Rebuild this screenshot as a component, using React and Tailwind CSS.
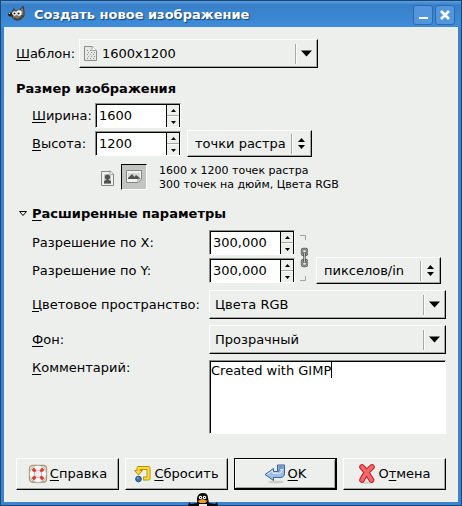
import React from "react";

const raised =
  "border border-t-white border-l-white border-b-black border-r-black shadow-[inset_-1px_-1px_0_#a6a8a5]";
const sunken =
  "border border-t-[#8c8e8b] border-l-[#8c8e8b] border-b-white border-r-white";

function WilberIcon() {
  return (
    <svg width="18" height="16" viewBox="0 0 18 16" className="shrink-0" aria-hidden="true">
      <path d="M5 4 L8 5 L12 4 L15 0 L16 5 L16 9 C15 13 12 14 9 14 C6 14 4 12 4 9 Z" fill="#7d7767" stroke="#37352e" />
      <path d="M5 1 L8 5 L5 6 Z" fill="#4f4b42" />
      <ellipse cx="3" cy="8.500" rx="3" ry="2" fill="#25251f" />
      <path d="M6 12 C9 15 13 13 15 9" stroke="#4a463d" strokeWidth="2" fill="none" />
      <circle cx="6.500" cy="7.500" r="2.300" fill="#fff" />
      <circle cx="11" cy="7" r="2.700" fill="#fff" />
      <circle cx="6.500" cy="7.500" r="1" fill="#111" />
      <circle cx="10.500" cy="7.500" r="1.100" fill="#111" />
      <path d="M1 8 L2 7" stroke="#ddd" />
    </svg>
  );
}

function TemplateIcon() {
  return (
    <svg width="14" height="16" viewBox="0 0 14 16" className="pointer-events-none" aria-hidden="true">
      <path d="M1.500 0.500 H9.500 L13.500 4.500 V14.500 H1.500 Z" fill="#e7e8e6" stroke="#8b8d8a" />
      <path d="M9.500 0.500 L8.500 4.500 L13.500 4.500" fill="#fff" stroke="#a5a7a4" />
      <path d="M4 4.500h1M7 4.500h1M5 6.500h1M8 6.500h1M11 6.500h1M4 8.500h1M7 8.500h1M10 8.500h1M5 10.500h1M8 10.500h1M11 10.500h1M4 12.500h1M7 12.500h1M10 12.500h1" stroke="#8f918e" />
      <path d="M5 5 L10 12 M10 7 L4 12" stroke="#d0d2cf" strokeWidth="0.500" />
    </svg>
  );
}

function PortraitIcon() {
  return (
    <svg width="14" height="17" viewBox="0 0 14 17" aria-hidden="true">
      <path d="M0.500 1.500 H9.500 L12.500 4.500 V15.500 H0.500 Z" fill="#f1f2f0" stroke="#858784" />
      <path d="M9 0.500 L13 4.500 H9 Z" fill="#f8f8f8" stroke="#a0a29f" />
      <rect x="3" y="4" width="7" height="10" fill="#c9cbc8" />
      <circle cx="6.500" cy="7" r="2.600" fill="#50524f" />
      <path d="M5.500 9 H7.500 V10 L10 11 V13.500 H3 V11 L5.500 10 Z" fill="#50524f" />
    </svg>
  );
}

function LandscapeIcon() {
  return (
    <svg width="17" height="14" viewBox="0 0 17 14" aria-hidden="true">
      <path d="M0.500 0.500 H15.500 V9.500 L12.500 12.500 H0.500 Z" fill="#f1f2f0" stroke="#858784" />
      <rect x="2" y="3" width="12" height="6" fill="#d5d7d4" />
      <path d="M2 9 V8 L6 4 L8.500 7 L10 5 L14 8 V9 Z" fill="#50524f" />
      <path d="M12 12.500 V9 H15.500 Z" fill="#fff" stroke="#a0a29f" />
    </svg>
  );
}

function ChainIcon() {
  return (
    <svg width="8" height="48" viewBox="0 0 8 48" aria-hidden="true">
      <path d="M0 1.500 H5.500 V6 M0 46.500 H5.500 V42" fill="none" stroke="#a0a29f" />
      <rect x="2" y="15" width="5" height="6" rx="1.500" fill="none" stroke="#5d5f5c" strokeWidth="2.400" />
      <rect x="2" y="26" width="5" height="6" rx="1.500" fill="none" stroke="#5d5f5c" strokeWidth="2.400" />
      <rect x="2" y="15" width="5" height="6" rx="1.500" fill="none" stroke="#c4c6c3" strokeWidth="0.700" />
      <rect x="2" y="26" width="5" height="6" rx="1.500" fill="none" stroke="#c4c6c3" strokeWidth="0.700" />
      <path d="M4.500 18 V29" stroke="#4d4f4c" strokeWidth="2.400" />
      <path d="M4.500 18.500 V28.500" stroke="#e0e1df" strokeWidth="0.800" />
    </svg>
  );
}

function HelpIcon() {
  return (
    <svg width="20" height="20" viewBox="0 0 20 20" aria-hidden="true">
      <ellipse cx="10" cy="18" rx="8" ry="1.500" fill="#d3d4d2" />
      <rect x="1.500" y="1.500" width="17" height="16.500" rx="3" fill="none" stroke="#b29a70" strokeWidth="1.300" />
      <circle cx="10" cy="10" r="6" fill="none" stroke="#a8a8a6" strokeWidth="5.600" />
      <circle cx="10" cy="10" r="6" fill="none" stroke="#f8f8f7" strokeWidth="4.400" />
      <path d="M3.500 6 L6 3.500 L8.500 6.500 L6.500 8.500 Z M16.500 6 L14 3.500 L11.500 6.500 L13.500 8.500 Z M3.500 14 L6 16.500 L8.500 13.500 L6.500 11.500 Z M16.500 14 L14 16.500 L11.500 13.500 L13.500 11.500 Z" fill="#ec3434" />
    </svg>
  );
}

function ResetIcon() {
  return (
    <svg width="18" height="18" viewBox="0 0 18 18" aria-hidden="true">
      <path d="M4.500 6 V3 H14.500 V13.500 H9" fill="none" stroke="#b89205" strokeWidth="4" strokeLinejoin="round" />
      <path d="M0.500 5.500 H8.500 L4.500 10 Z" fill="#f9dc3c" stroke="#b89205" />
      <path d="M4.500 7 V3 H14.500 V13.500 H9.800" fill="none" stroke="#f9dc3c" strokeWidth="2.200" />
      <circle cx="4.500" cy="14" r="2.800" fill="#4773ad" stroke="#244c82" />
      <circle cx="3.800" cy="13.100" r="0.900" fill="#8fb0da" />
    </svg>
  );
}

function OkIcon() {
  return (
    <svg width="22" height="20" viewBox="0 0 22 20" aria-hidden="true">
      <ellipse cx="12" cy="18" rx="8" ry="1.500" fill="#cccdcb" />
      <path d="M13.500 1 H20.500 V9 Q20.500 13.500 16 13.500 H9.500 V16.500 L1 10.500 L9.500 4.500 V7.500 H13.500 Z" fill="#9fbfe2" stroke="#3a659c" strokeLinejoin="round" />
      <path d="M14.500 2 H19.500 V5.500 H14.500 Z" fill="#6f9bcc" />
      <path d="M15.500 5.500 H19 L16 9.500 H9" fill="none" stroke="#d5e5f5" />
      <path d="M3 10.500 L8.500 6.500 V9 H14" fill="none" stroke="#d5e5f5" />
      <path d="M13.500 7.500 Q15.500 7.500 15.500 5.500" fill="none" stroke="#3a659c" />
    </svg>
  );
}

function CancelIcon() {
  return (
    <svg width="18" height="20" viewBox="0 0 18 20" aria-hidden="true">
      <ellipse cx="9" cy="18.500" rx="7" ry="1.300" fill="#d0d1cf" />
      <path d="M4 3 Q8 7 13.500 16 M14 3 Q8 8 4 16" fill="none" stroke="#bd1d26" strokeWidth="5.600" strokeLinecap="round" />
      <path d="M4 3 Q8 7 13.500 16 M14 3 Q8 8 4 16" fill="none" stroke="#f4676b" strokeWidth="3.600" strokeLinecap="round" />
    </svg>
  );
}

function Penguin() {
  return (
    <svg width="30" height="13" viewBox="0 0 30 13" aria-hidden="true">
      <path d="M0 13 L1 9 L3 11 L9 10 L9 5 Q10 0 15 0 Q20 0 20 5 L21 10 L27 11 L29 9 L30 13 Z" fill="#0b0b0b" />
      <circle cx="12.500" cy="4.500" r="1.700" fill="#fff" />
      <circle cx="16.500" cy="4.500" r="1.700" fill="#fff" />
      <rect x="12" y="4" width="1" height="1" fill="#000" />
      <rect x="16" y="4" width="1" height="1" fill="#000" />
      <path d="M9.500 8 L14.500 6 L19.500 8 L17 10 H12 Z" fill="#f3a012" />
      <rect x="11" y="11" width="8" height="2" fill="#e8e8e6" />
    </svg>
  );
}

function Spin({ id, value, label }) {
  return (
    <div className={`flex h-[25px] w-[86px] shrink-0 ${sunken}`}>
      <div className="flex min-w-0 flex-1 border-t border-l border-r border-black bg-white">
        <input
          id={id}
          aria-label={label}
          defaultValue={value}
          className="min-w-0 flex-1 bg-white pl-[2px] outline-none"
        />
        <div className="flex w-[13px] shrink-0 flex-col border-l border-black bg-[#edefed]">
          <button aria-label="Увеличить" className="flex flex-1 items-center justify-center border-b border-[#a6a8a5]">
            <svg width="5" height="3" viewBox="0 0 5 3"><path d="M0 3 L2.500 0 L5 3 Z" /></svg>
          </button>
          <button aria-label="Уменьшить" className="flex flex-1 items-center justify-center border-t border-white">
            <svg width="5" height="3" viewBox="0 0 5 3"><path d="M0 0 L2.500 3 L5 0 Z" /></svg>
          </button>
        </div>
      </div>
    </div>
  );
}

function Select({ id, label, options, size, double, icon }) {
  return (
    <div className={`relative ${size}`}>
      <select
        id={id}
        aria-label={label}
        className={`block size-full appearance-none bg-[#edefed] outline-none ${raised} ${icon ? "pl-[22px]" : double ? "pl-[7px]" : "pl-[5px]"}`}
      >
        {options.map((o) => (
          <option key={o}>{o}</option>
        ))}
      </select>
      {icon && <span className="pointer-events-none absolute inset-y-0 left-1 flex items-center">{icon}</span>}
      <span className="pointer-events-none absolute inset-y-0 right-[6px] flex items-center gap-1">
        <span className="h-5 w-[2px] border-r border-l border-r-white border-l-[#a6a8a5]" />
        {double ? (
          <svg width="9" height="13" viewBox="0 0 9 13"><path d="M1 5 L4.500 1 L8 5 Z M1 8 L4.500 12 L8 8 Z" /></svg>
        ) : (
          <svg width="11" height="7" viewBox="0 0 11 7"><path d="M0 0.500 H11 L5.500 6.500 Z" /></svg>
        )}
      </span>
    </div>
  );
}

function ActionButton({ icon, isDefault, children }) {
  return (
    <button
      className={`flex h-8 items-center justify-center gap-[2px] ${
        isDefault
          ? "border border-r-2 border-b-2 border-black shadow-[inset_1px_1px_0_#fff,inset_-1px_-1px_0_#a6a8a5]"
          : raised
      }`}
    >
      {icon}
      <span>{children}</span>
    </button>
  );
}

export default function App() {
  return (
    <div className="relative bg-[#1d4872] p-px font-['DejaVu_Sans',sans-serif] text-[13px] leading-4 text-black [&_u]:underline-offset-2">
      <div className="bg-[#3a83d0] px-[3px] pb-[3px]">
        <header className="-mx-[3px] flex h-[26px] items-center bg-linear-to-b from-[#5a9fe4] via-[#397fc8] via-15% to-[#3d8cdb] pr-[6px] pl-[7px]">
          <WilberIcon />
          <h1 className="mt-[2px] ml-2 flex-1 font-bold whitespace-nowrap text-white [text-shadow:1px_1px_1px_#173f6b]">
            Создать новое изображение
          </h1>
          <div className="mt-[2px] flex gap-[2px]">
            <button aria-label="Свернуть" className="flex size-5 items-center justify-center rounded-[3px] border border-[#2b6cb0] bg-[#5496dc]">
              <svg width="10" height="10" viewBox="0 0 10 10"><path d="M1 8 H10" stroke="#fff" strokeWidth="2" /></svg>
            </button>
            <button aria-label="Закрыть" className="flex size-5 items-center justify-center rounded-[3px] border border-[#2b6cb0] bg-[#5496dc]">
              <svg width="10" height="10" viewBox="0 0 10 10"><path d="M1 1 L9 9 M9 1 L1 9" stroke="#fff" strokeWidth="2.600" /></svg>
            </button>
          </div>
        </header>

        <main className="bg-[#edefed] p-3">
          <div className="flex items-center">
            <label htmlFor="template" className="w-[63px]"><u>Ш</u>аблон:</label>
            <Select id="template" options={["1600x1200"]} size="h-[29px] w-[239px]" icon={<TemplateIcon />} />
          </div>

          <h2 className="mt-[13px] font-bold">Размер изображения</h2>

          <div className="mt-[6px] flex flex-col gap-[2px] pl-4">
            <div className="flex items-center">
              <label htmlFor="width" className="w-[63px]"><u>Ш</u>ирина:</label>
              <Spin id="width" value="1600" />
            </div>
            <div className="flex items-center">
              <label htmlFor="height" className="w-[63px]"><u>В</u>ысота:</label>
              <Spin id="height" value="1200" />
              <div className="ml-[6px]">
                <Select label="Единицы размера" options={["точки растра"]} size="h-[27px] w-[125px]" double />
              </div>
            </div>
          </div>

          <div className="mt-[7px] flex items-start pl-[85px]">
            <button aria-label="Портрет" className="flex w-5 self-center"><PortraitIcon /></button>
            <button
              aria-label="Альбом"
              aria-pressed="true"
              className="flex size-[26px] items-center justify-center border border-t-black border-r-white border-b-white border-l-black bg-[#c3c5c2]"
            >
              <LandscapeIcon />
            </button>
            <p className="ml-3 text-[11px] leading-[14px]">
              1600 x 1200 точек растра
              <br />
              300 точек на дюйм, Цвета RGB
            </p>
          </div>

          <button aria-expanded="true" className="mt-[14px] flex items-center font-bold">
            <svg width="16" height="8" viewBox="0 0 16 8"><path d="M3.500 1.500 H10.500 L7 5.500 Z" fill="#edefed" stroke="#000" /></svg>
            <span><u>Р</u>асширенные параметры</span>
          </button>

          <div className="mt-2 flex flex-col gap-[6px] pl-4">
            <div className="flex items-end">
              <div className="flex flex-col gap-[3px] pb-px">
                <div className="flex items-center">
                  <label htmlFor="resx" className="w-[177px]">Разрешение по X:</label>
                  <Spin id="resx" value="300,000" />
                </div>
                <div className="flex items-center">
                  <label htmlFor="resy" className="w-[177px]">Разрешение по Y:</label>
                  <Spin id="resy" value="300,000" />
                </div>
              </div>
              <button aria-label="Связать" className="mx-[5px] mb-[2px] flex w-[11px]"><ChainIcon /></button>
              <Select label="Единицы разрешения" options={["пикселов/in"]} size="h-[27px] w-[125px]" double />
            </div>
            <div className="flex items-center">
              <label htmlFor="space" className="w-[177px] shrink-0 whitespace-nowrap"><u>Ц</u>ветовое пространство:</label>
              <Select id="space" options={["Цвета RGB"]} size="h-[29px] flex-1" />
            </div>
            <div className="flex items-center">
              <label htmlFor="fill" className="w-[177px] shrink-0"><u>Ф</u>он:</label>
              <Select id="fill" options={["Прозрачный"]} size="h-[29px] flex-1" />
            </div>
            <div className="flex items-start">
              <label htmlFor="comment" className="w-[177px] shrink-0"><u>К</u>омментарий:</label>
              <div className={`relative flex h-[74px] flex-1 ${sunken}`}>
                <textarea
                  id="comment"
                  defaultValue="Created with GIMP"
                  className="block flex-1 resize-none border-t border-l border-black bg-white pt-px outline-none"
                />
                <span className="pointer-events-none absolute top-px left-px flex h-4 items-stretch">
                  <span className="invisible">Created with GIMP</span>
                  <span className="w-px bg-black" />
                </span>
              </div>
            </div>
          </div>

          <footer className="mt-6 grid grid-cols-4 gap-[6px]">
            <ActionButton icon={<HelpIcon />}><u>С</u>правка</ActionButton>
            <ActionButton icon={<ResetIcon />}><u>С</u>бросить</ActionButton>
            <ActionButton icon={<OkIcon />} isDefault><u>O</u>K</ActionButton>
            <ActionButton icon={<CancelIcon />}>О<u>т</u>мена</ActionButton>
          </footer>
        </main>
      </div>
      <div className="absolute bottom-0 left-[188px]"><Penguin /></div>
    </div>
  );
}
